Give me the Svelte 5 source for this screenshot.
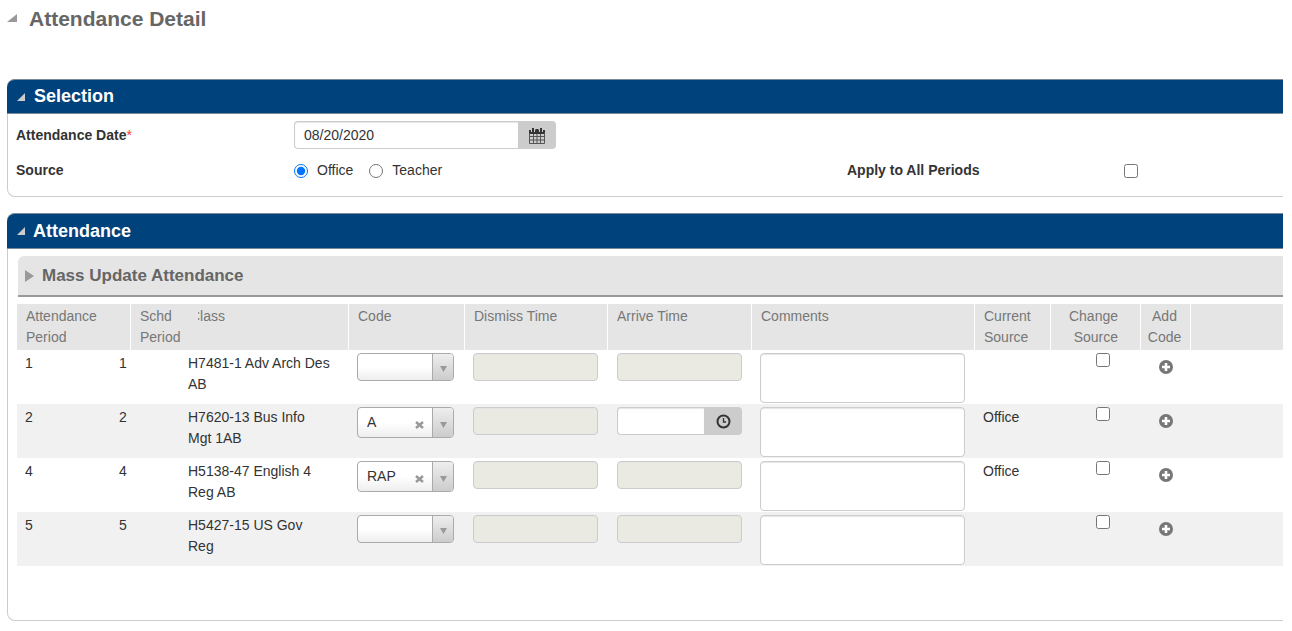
<script>
  let date = '08/20/2020';
  let source = 'office';
  let applyAll = false;

  let rows = [
    { period: 1, schd: 1, name: 'H7481-1 Adv Arch Des AB', code: '', arrive: false, current: '', change: false },
    { period: 2, schd: 2, name: 'H7620-13 Bus Info Mgt 1AB', code: 'A', arrive: true, current: 'Office', change: false },
    { period: 4, schd: 4, name: 'H5138-47 English 4 Reg AB', code: 'RAP', arrive: false, current: 'Office', change: false },
    { period: 5, schd: 5, name: 'H5427-15 US Gov Reg', code: '', arrive: false, current: '', change: false }
  ];

  function clearCode(index) {
    rows[index].code = '';
  }
</script>

<main>
  <h1>
    <svg class="fold" width="10" height="8" viewBox="0 0 10 8"><path d="M10 0V8H0Z" fill="#999" /></svg>
    Attendance Detail
  </h1>

  <section class="panel selection">
    <h2>
      <svg class="fold" width="8" height="8" viewBox="0 0 8 8"><path d="M8 0V8H0Z" fill="#ccc" /></svg>
      Selection
    </h2>
    <div class="form">
      <label class="name" for="date">Attendance Date<span class="required">*</span></label>
      <div class="date">
        <input id="date" type="text" bind:value={date}>
        <button class="addon" aria-label="Pick a date">
          <svg width="16" height="17" viewBox="0 0 16 17" fill="none">
            <path d="M0 3h16v4H0z" fill="#333" />
            <path d="M.5 6v10.500h15V6M.5 9.500h15M.5 13h15M4.500 7v9M8 7v9M11.500 7v9" stroke="#555" />
            <path d="M4 0v5M12 0v5" stroke="#ccc" stroke-width="4" />
            <path d="M4 1v4M12 1v4" stroke="#333" stroke-width="2" />
            <path d="M8 2v2" stroke="#333" stroke-width="3" />
          </svg>
        </button>
      </div>
      <span class="name" id="source">Source</span>
      <div class="radios" role="radiogroup" aria-labelledby="source">
        <label><input type="radio" value="office" bind:group={source}>Office</label>
        <label><input type="radio" value="teacher" bind:group={source}>Teacher</label>
      </div>
      <label class="name" for="all">Apply to All Periods</label>
      <input id="all" type="checkbox" bind:checked={applyAll}>
    </div>
  </section>

  <section class="panel attendance">
    <h2>
      <svg class="fold" width="8" height="8" viewBox="0 0 8 8"><path d="M8 0V8H0Z" fill="#ccc" /></svg>
      Attendance
    </h2>
    <h3>
      <svg width="9" height="12" viewBox="0 0 9 12"><path d="M0 0L9 6L0 12Z" fill="#999" /></svg>
      Mass Update Attendance
    </h3>
    <table>
      <thead>
        <tr>
          <th>Attendance Period</th>
          <th class="schd">Schd Period</th>
          <th class="class"><span>Class</span></th>
          <th>Code</th>
          <th>Dismiss Time</th>
          <th>Arrive Time</th>
          <th>Comments</th>
          <th>Current Source</th>
          <th class="change">Change Source</th>
          <th class="add-code">Add Code</th>
          <th class="rest"></th>
        </tr>
      </thead>
      <tbody>
        {#each rows as row, index}
          <tr>
            <td>{row.period}</td>
            <td>{row.schd}</td>
            <td class="title">{row.name}</td>
            <td>
              <div class="code" class:filled={row.code}>
                <select bind:value={row.code} aria-label="Code">
                  <option value=""></option>
                  <option value="A">A</option>
                  <option value="RAP">RAP</option>
                </select>
                {#if row.code}
                  <button class="clear" aria-label="Clear code" on:click={() => clearCode(index)}>
                    <svg width="9" height="8" viewBox="0 0 9 8"><path d="M1 1l7 6M8 1l-7 6" stroke="#999" stroke-width="2.500" /></svg>
                  </button>
                {/if}
                <span class="arrow">
                  <svg width="7" height="6" viewBox="0 0 7 6"><path d="M0 0H7L3.500 6Z" fill="#999" /></svg>
                </span>
              </div>
            </td>
            <td><input class="time" type="text" aria-label="Dismiss time" disabled></td>
            <td>
              {#if row.arrive}
                <div class="pick">
                  <input type="text" aria-label="Arrive time">
                  <button class="addon" aria-label="Pick a time">
                    <svg width="15" height="15" viewBox="0 0 15 15" fill="none" stroke="#333">
                      <circle cx="7.500" cy="7.500" r="6" stroke-width="2" />
                      <path d="M7.500 4v4H10" stroke-width="1.300" />
                    </svg>
                  </button>
                </div>
              {:else}
                <input class="time" type="text" aria-label="Arrive time" disabled>
              {/if}
            </td>
            <td><textarea aria-label="Comments"></textarea></td>
            <td>{row.current}</td>
            <td class="change"><input type="checkbox" aria-label="Change source" bind:checked={row.change}></td>
            <td class="add-code">
              <button class="add" aria-label="Add code">
                <svg width="14" height="14" viewBox="0 0 14 14">
                  <circle cx="7" cy="7" r="7" fill="#777" />
                  <path d="M7 3v8M3 7h8" stroke="#fff" stroke-width="2.600" />
                </svg>
              </button>
            </td>
            <td></td>
          </tr>
        {/each}
      </tbody>
    </table>
  </section>
</main>

<style>
  :global(body) {
    margin: 0;
    background: #fff;
  }

  main {
    padding: 4px 9px 9px 7px;
    font-family: Arial, 'Liberation Sans', sans-serif;
    font-size: 14px;
    line-height: 21px;
    color: #333;
  }

  main * {
    box-sizing: border-box;
  }

  input,
  select,
  button,
  textarea {
    margin: 0;
    font: inherit;
    color: inherit;
  }

  button {
    display: flex;
    align-items: center;
    justify-content: center;
    padding: 0;
    border: 0;
    background: none;
    cursor: pointer;
  }

  h1,
  h2,
  h3 {
    display: flex;
    align-items: center;
    margin: 0;
    color: #666;
  }

  h1 {
    gap: 12px;
    height: 28px;
    margin-bottom: 47px;
    font-size: 21px;
  }

  .panel {
    border: 1px solid #ccc;
    border-right: 0;
    border-radius: 8px 0 0 8px;
  }

  h2 {
    gap: 9px;
    height: 35px;
    margin: -1px 0 0 -1px;
    padding-left: 10px;
    border: 1px solid #7a8a99;
    border-width: 1px 0;
    border-radius: 8px 0 0 0;
    background: #00427c;
    color: #fff;
    font-size: 18px;
  }

  .form {
    display: grid;
    grid-template-columns: 278px 553px 277px 1fr;
    align-items: center;
    row-gap: 11px;
    padding: 7px 0 15px 8px;
  }

  .name {
    font-weight: bold;
  }

  .required {
    color: #f33;
    font-weight: normal;
  }

  .date {
    display: flex;
    grid-column: 2 / 5;
    width: 262px;
    height: 28px;
  }

  input[type='text'],
  textarea {
    min-width: 0;
    border: 1px solid #ccc;
    border-radius: 4px;
    background: #fff;
    box-shadow: inset 0 1px 1px #e5e5e5;
  }

  .date input,
  .pick input {
    flex: 1;
    padding: 0 9px;
    border-right: 0;
    border-radius: 4px 0 0 4px;
  }

  .addon {
    width: 38px;
    border-radius: 0 4px 4px 0;
    background: #ccc;
  }

  .radios {
    display: flex;
    gap: 16px;
  }

  .radios label {
    display: flex;
    align-items: center;
    gap: 9px;
  }

  input[type='radio'],
  input[type='checkbox'] {
    width: 14px;
    height: 14px;
  }

  .attendance {
    margin-top: 16px;
    padding-bottom: 54px;
  }

  .attendance h2 {
    gap: 8px;
    height: 36px;
  }

  h3 {
    gap: 8px;
    height: 41px;
    margin: 7px 0 7px 10px;
    padding-left: 7px;
    border-bottom: 2px solid #999;
    border-radius: 6px 0 0 0;
    background: #e5e5e5;
    font-size: 17px;
  }

  table {
    display: block;
    margin-left: 9px;
  }

  thead,
  tbody {
    display: block;
  }

  tr {
    display: grid;
    grid-template-columns: 94px 69px 169px 116px 144px 143px 223px 76px 90px 50px 1fr;
    height: 54px;
  }

  /* header cells run wider than the body cells in the first columns */
  thead tr {
    grid-template-columns: 114px 58px 160px 116px 143px 144px 223px 76px 90px 50px 1fr;
    height: 46px;
  }

  tbody tr:nth-child(even) {
    background: #f1f1f1;
  }

  th {
    padding: 2px 0 2px 9px;
    border-right: 1px solid #fff;
    background: #e5e5e5;
    color: #777;
    font-weight: normal;
    text-align: left;
  }

  th.schd,
  th.rest {
    border-right: 0;
  }

  th.class span {
    display: block;
    overflow: hidden;
    text-indent: -8px;
  }

  td {
    padding: 3px 0 0 8px;
  }

  td.title {
    padding-right: 18px;
  }

  th.change {
    padding-right: 22px;
    text-align: right;
  }

  th.add-code {
    padding: 2px 6px 2px 4px;
    text-align: center;
  }

  td.change,
  td.add-code {
    display: flex;
    align-items: flex-start;
    justify-content: center;
    padding-left: 0;
  }

  td.change {
    padding-left: 14px;
  }

  .time {
    display: block;
    width: 125px;
    height: 28px;
  }

  input.time:disabled {
    background: #eaeae2;
  }

  .pick {
    display: flex;
    width: 125px;
    height: 28px;
  }

  textarea {
    display: block;
    width: 205px;
    height: 50px;
    resize: none;
  }

  .code {
    position: relative;
    width: 97px;
    height: 28px;
  }

  .code.filled {
    height: 31px;
  }

  select {
    width: 100%;
    height: 100%;
    padding: 0 9px;
    border: 1px solid #aaa;
    border-radius: 4px;
    background: linear-gradient(#fff 50%, #eee);
    appearance: none;
  }

  .arrow {
    position: absolute;
    top: 1px;
    right: 1px;
    bottom: 1px;
    display: flex;
    align-items: center;
    justify-content: center;
    width: 21px;
    padding-top: 4px;
    border-left: 1px solid #aaa;
    border-radius: 0 3px 3px 0;
    background: linear-gradient(#eee, #ccc);
    pointer-events: none;
  }

  .clear {
    position: absolute;
    top: 14px;
    right: 30px;
  }

  .add {
    height: 28px;
  }
</style>
